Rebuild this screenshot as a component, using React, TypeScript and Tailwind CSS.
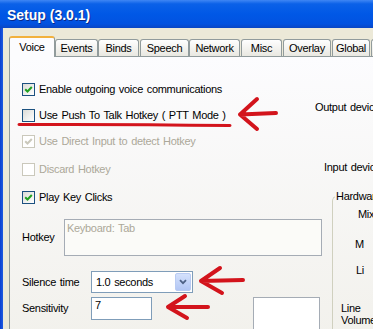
import React from "react";

const Check = ({ checked, disabled }: { checked?: boolean; disabled?: boolean }) => (
  <span
    className={`w-[13px] h-[13px] shrink-0 border flex items-center justify-center ${
      disabled ? "border-[#cac8bb] bg-white" : "border-[#1c5180] bg-linear-to-br from-[#dcdcd7] to-white"
    }`}
  >
    {checked && (
      <svg width="9" height="9" viewBox="0 0 9 9">
        <path d="M1.2 4.2 L3.5 6.5 L7.8 2" stroke={disabled ? "#cac8bb" : "#21a121"} strokeWidth="2" fill="none" />
      </svg>
    )}
  </span>
);

const CheckRow = ({
  label,
  checked,
  disabled,
  className = "",
}: {
  label: string;
  checked?: boolean;
  disabled?: boolean;
  className?: string;
}) => (
  <div className={`flex items-center h-[14px] gap-[4px] ${className}`}>
    <Check checked={checked} disabled={disabled} />
    <span className={`whitespace-nowrap ${disabled ? "text-[#aca899]" : "text-black"}`}>{label}</span>
  </div>
);

const tabs: { label: string; w: string; ml: string }[] = [
  { label: "Events", w: "w-[43px]", ml: "ml-0" },
  { label: "Binds", w: "w-[41px]", ml: "ml-0" },
  { label: "Speech", w: "w-[49px]", ml: "ml-[1px]" },
  { label: "Network", w: "w-[51px]", ml: "ml-0" },
  { label: "Misc", w: "w-[41px]", ml: "ml-[1px]" },
  { label: "Overlay", w: "w-[48px]", ml: "ml-[1px]" },
  { label: "Global", w: "w-[38px]", ml: "ml-[1px]" },
  { label: "", w: "w-[30px]", ml: "ml-[1px]" },
];

export default function App() {
  return (
    <div className="relative w-[373px] h-[329px] overflow-hidden bg-[#ece9d8] text-[11px] leading-[13px] tracking-[-0.3px] [word-spacing:1px] [font-family:'Liberation_Sans',Arial,sans-serif]">
      {/* Title bar */}
      <div className="h-[28px] flex items-center pl-[7px] pt-[2px] bg-[linear-gradient(to_bottom,#3f86f4_0%,#0b61e8_14%,#0058e6_50%,#0252e0_85%,#0a46c4_100%)]">
        <span className="text-white font-bold text-[14px] leading-[16px] tracking-normal [word-spacing:0] [text-shadow:1px_1px_0_#0b2a8a]">
          Setup (3.0.1)
        </span>
      </div>

      <div className="flex h-[301px]">
        <div className="w-[3px] shrink-0 bg-linear-to-r from-[#0a3fd0] to-[#1e5be0]" />
        <div className="flex-1 flex flex-col pl-[6px] pt-[8px] min-w-0">
          {/* Tabs */}
          <div className="relative z-10 flex items-end h-[21px] -mb-px shrink-0">
            <div className="w-[46px] h-[21px] shrink-0 bg-[#fcfcfe] border-l border-r border-[#919b9c] border-t-2 border-t-[#f2b13d] rounded-t-[3px] flex items-center justify-center">
              Voice
            </div>
            {tabs.map((t) => (
              <div
                key={t.label + t.w}
                className={`${t.w} ${t.ml} h-[17px] mb-px shrink-0 border border-b-0 border-[#919b9c] rounded-t-[3px] bg-linear-to-b from-[#fefefe] to-[#e9e8e1] flex items-center justify-center whitespace-nowrap`}
              >
                {t.label}
              </div>
            ))}
          </div>

          {/* Panel */}
          <div className="flex-1 border-l border-t border-[#919b9c] bg-linear-to-b from-[#fcfcfe] to-[#f2f1ec] flex flex-col min-w-0">
            {/* Top section */}
            <div className="flex h-[133px] shrink-0">
              <div className="w-[305px] shrink-0 pl-[12px] flex flex-col">
                <CheckRow className="mt-[25px]" checked label="Enable outgoing voice communications" />
                <CheckRow className="mt-[12px]" label="Use Push To Talk Hotkey ( PTT Mode )" />
                <CheckRow className="mt-[12px]" checked disabled label="Use Direct Input to detect Hotkey" />
                <CheckRow className="mt-[14px]" disabled label="Discard Hotkey" />
              </div>
              <div className="flex flex-col whitespace-nowrap">
                <span className="mt-[44px]">Output device</span>
                <span className="mt-[47px] pl-[9px]">Input device</span>
              </div>
            </div>

            {/* Bottom section */}
            <div className="flex flex-1 min-h-0">
              <div className="w-[322px] shrink-0 flex flex-col">
                <CheckRow className="pl-[12px]" checked label="Play Key Clicks" />

                <div className="flex items-center mt-[15px]">
                  <span className="w-[54px] pl-[12px] shrink-0">Hotkey</span>
                  <div className="w-[258px] h-[37px] border border-[#a5acb5] bg-[#fbfbf8] pl-[2px] pt-[2px] text-[#aca899] whitespace-nowrap">
                    Keyboard: Tab
                  </div>
                </div>

                <div className="flex items-center mt-[15px]">
                  <span className="w-[81px] pl-[12px] shrink-0 whitespace-nowrap">Silence time</span>
                  <div className="w-[102px] h-[22px] border border-[#7f9db9] bg-white flex items-center pl-[4px] pr-px">
                    <span className="flex-1 whitespace-nowrap">1.0 seconds</span>
                    <div className="w-[16px] h-[18px] rounded-[2px] border border-[#b9cbf3] bg-linear-to-b from-[#d4e1fc] to-[#b2c6f4] flex items-center justify-center">
                      <svg width="8" height="6" viewBox="0 0 8 6">
                        <path d="M1 1.2 L4 4.2 L7 1.2" stroke="#4d6185" strokeWidth="1.8" fill="none" />
                      </svg>
                    </div>
                  </div>
                </div>

                <div className="flex items-start mt-[4px]">
                  <span className="w-[81px] pl-[12px] shrink-0 mt-[5px]">Sensitivity</span>
                  <div className="w-[61px] h-[23px] border border-[#7f9db9] bg-white pl-[3px] pt-px shrink-0">7</div>
                  <div className="ml-[101px] w-[67px] h-[40px] border border-[#a5acb5] bg-white shrink-0" />
                </div>
              </div>

              <fieldset className="flex-1 border-l border-t border-[#d0d0bf] rounded-tl-[5px] min-w-0 flex flex-col whitespace-nowrap">
                <legend className="ml-[2px] px-[1px] leading-[13px]">Hardware</legend>
                <span className="mt-[5px] pl-[25px]">Mix</span>
                <span className="mt-[17px] pl-[22px]">M</span>
                <span className="mt-[13px] pl-[23px]">Li</span>
                <span className="mt-[25px] pl-[8px] leading-[12px]">Line</span>
                <span className="pl-[8px] leading-[12px]">Volume</span>
              </fieldset>
            </div>
          </div>
        </div>
      </div>

      {/* Red annotations */}
      <svg className="absolute inset-0 pointer-events-none" width="373" height="329" viewBox="0 0 373 329">
        <g stroke="#d3141c" strokeLinecap="round" strokeLinejoin="round" fill="none">
          <path d="M19 124.5 Q120 124 230 125.5" strokeWidth="3" />
          <path d="M276 113 L240 114.5 M257 99 L240 114.5 L257 129" strokeWidth="4" />
          <path d="M243 280 L201 281 M220 268 L201 281 L222 293" strokeWidth="4" />
          <path d="M208 307 L168 307 M185 296 L168 307 L187 318" strokeWidth="4" />
        </g>
      </svg>
    </div>
  );
}
